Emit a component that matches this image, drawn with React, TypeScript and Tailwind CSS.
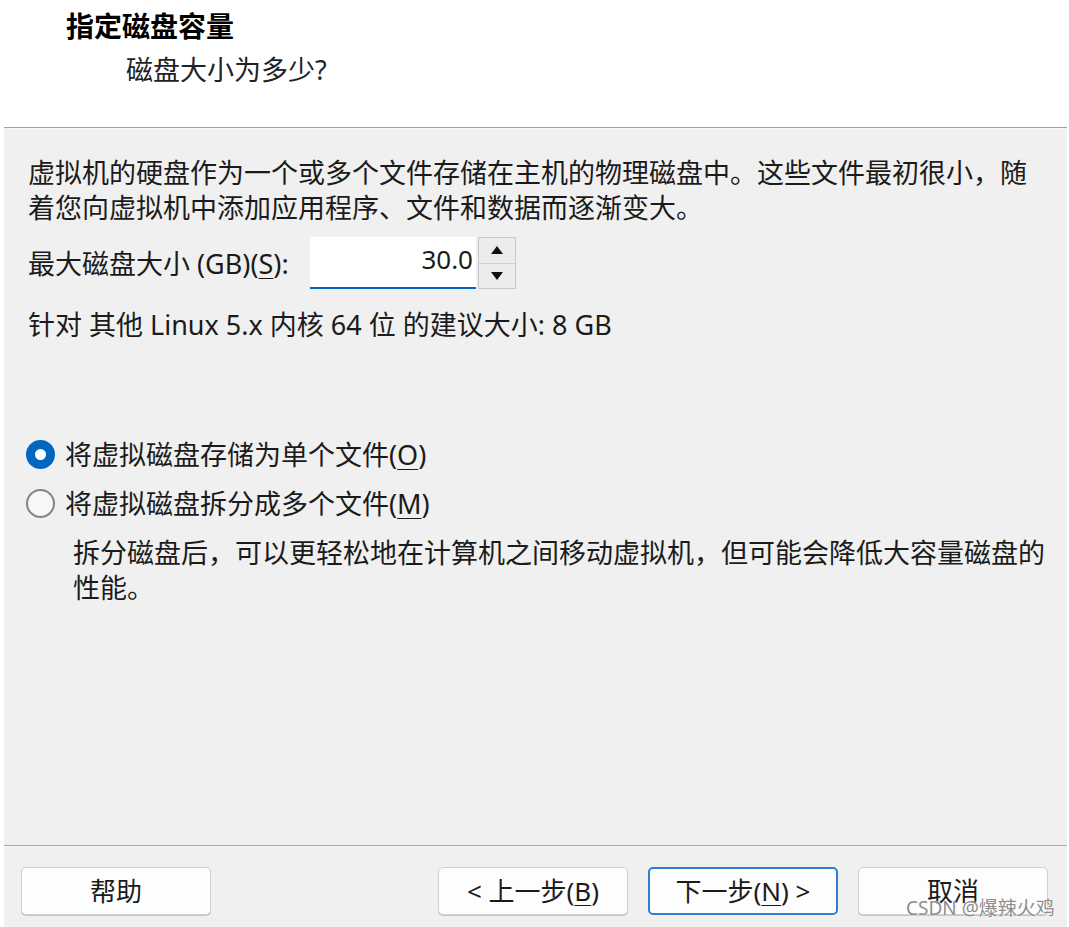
import { FC, ReactElement } from 'react';

const font = { fontFamily: '"Noto Sans", "Noto Sans CJK SC", sans-serif' };

const Key: FC<{ k: string }> = ({ k }): ReactElement => (
  <span className="underline decoration-1 underline-offset-[4px]">{k}</span>
);

const WizardButton: FC<{ children: React.ReactNode; primary?: boolean }> = ({
  children,
  primary,
}): ReactElement => (
  <button
    type="button"
    className={
      primary
        ? 'w-[190px] h-[48px] rounded-[5px] bg-[#fdfdfd] border-2 border-[#2b7fd4] text-[26px] text-[#1b1b1b] flex items-center justify-center'
        : 'w-[190px] h-[48px] rounded-[5px] bg-[#fdfdfd] border border-[#d0d0d0] shadow-[0_1px_0_#c4c4c4] text-[26px] text-[#1b1b1b] flex items-center justify-center'
    }
  >
    {children}
  </button>
);

const Radio: FC<{ checked?: boolean; children: React.ReactNode }> = ({
  checked,
  children,
}): ReactElement => (
  <div className="flex items-center h-[49px]">
    {checked ? (
      <div className="w-[29px] h-[29px] rounded-full bg-[#0067c0] flex items-center justify-center ml-[-2px]">
        <div className="w-[11px] h-[11px] rounded-full bg-white" />
      </div>
    ) : (
      <div className="w-[29px] h-[29px] rounded-full border-2 border-[#858585] bg-[#f7f7f7] ml-[-2px]" />
    )}
    <span className="ml-[10px] text-[27px] leading-[35px] text-[#1b1b1b]">{children}</span>
  </div>
);

const App: FC = (): ReactElement => {
  return (
    <div className="relative w-[1069px] h-[927px] bg-white flex flex-col overflow-hidden" style={font}>
      {/* header */}
      <div className="h-[127px] shrink-0 pt-[8px]">
        <h1 className="ml-[66px] text-[28px] leading-[36px] font-bold text-black">指定磁盘容量</h1>
        <p className="ml-[126px] mt-[8px] text-[27px] leading-[36px] text-[#222]">磁盘大小为多少?</p>
      </div>

      <div className="flex-1 ml-[4px] mr-[2px] bg-[#f0f0f0] flex flex-col">
        <div className="h-px bg-[#a0a0a0]" />
        <div className="h-px bg-[#f8f8f8]" />

        <div className="flex-1 pl-[24px] pr-[24px] pt-[26px] text-[#1b1b1b]">
          <p className="text-[27px] leading-[35px] w-[1012px]">
            虚拟机的硬盘作为一个或多个文件存储在主机的物理磁盘中。这些文件最初很小，随着您向虚拟机中添加应用程序、文件和数据而逐渐变大。
          </p>

          <div className="mt-[12px] flex items-center h-[52px]">
            <span className="w-[282px] text-[27px] leading-[35px]">
              最大磁盘大小 (GB)(<Key k="S" />):
            </span>
            <div className="w-[166px] h-[52px] bg-white border-b-2 border-[#0067c0] flex items-center justify-end pr-[3px] pb-[6px] text-[26px] text-[#1b1b1b]">
              30.0
            </div>
            <div className="ml-[2px] w-[38px] h-[52px] border border-[#c8c8c8] bg-[#ececec] flex flex-col">
              <div className="flex-1 border-b border-[#cfcfcf] flex items-center justify-center">
                <svg width="12" height="8" viewBox="0 0 12 8">
                  <path d="M6 0 L12 8 L0 8 Z" fill="#111" />
                </svg>
              </div>
              <div className="flex-1 flex items-center justify-center">
                <svg width="12" height="8" viewBox="0 0 12 8">
                  <path d="M0 0 L12 0 L6 8 Z" fill="#111" />
                </svg>
              </div>
            </div>
          </div>

          <p className="mt-[18px] text-[27px] leading-[35px]">
            针对 其他 Linux 5.x 内核 64 位 的建议大小: 8 GB
          </p>

          <div className="mt-[88px]">
            <Radio checked>
              将虚拟磁盘存储为单个文件(<Key k="O" />)
            </Radio>
            <Radio>
              将虚拟磁盘拆分成多个文件(<Key k="M" />)
            </Radio>
          </div>

          <p className="mt-[7px] ml-[45px] w-[990px] text-[27px] leading-[35px]">
            拆分磁盘后，可以更轻松地在计算机之间移动虚拟机，但可能会降低大容量磁盘的性能。
          </p>
        </div>

        {/* footer */}
        <div className="h-px bg-[#a8a8a8]" />
        <div className="h-px bg-[#f8f8f8]" />
        <div className="h-[80px] shrink-0 pt-[20px] pl-[17px] pr-[19px] flex items-start justify-between">
          <WizardButton>帮助</WizardButton>
          <div className="flex gap-[20px]">
            <WizardButton>
              &lt; 上一步(<Key k="B" />)
            </WizardButton>
            <WizardButton primary>
              下一步(<Key k="N" />) &gt;
            </WizardButton>
            <WizardButton>取消</WizardButton>
          </div>
        </div>
      </div>

      <span className="absolute left-[906px] top-[896px] text-[19px] leading-[24px] text-[#8e8e8e] [text-shadow:0_0_2px_#fff]">
        CSDN @爆辣火鸡
      </span>
    </div>
  );
};

export default App;
